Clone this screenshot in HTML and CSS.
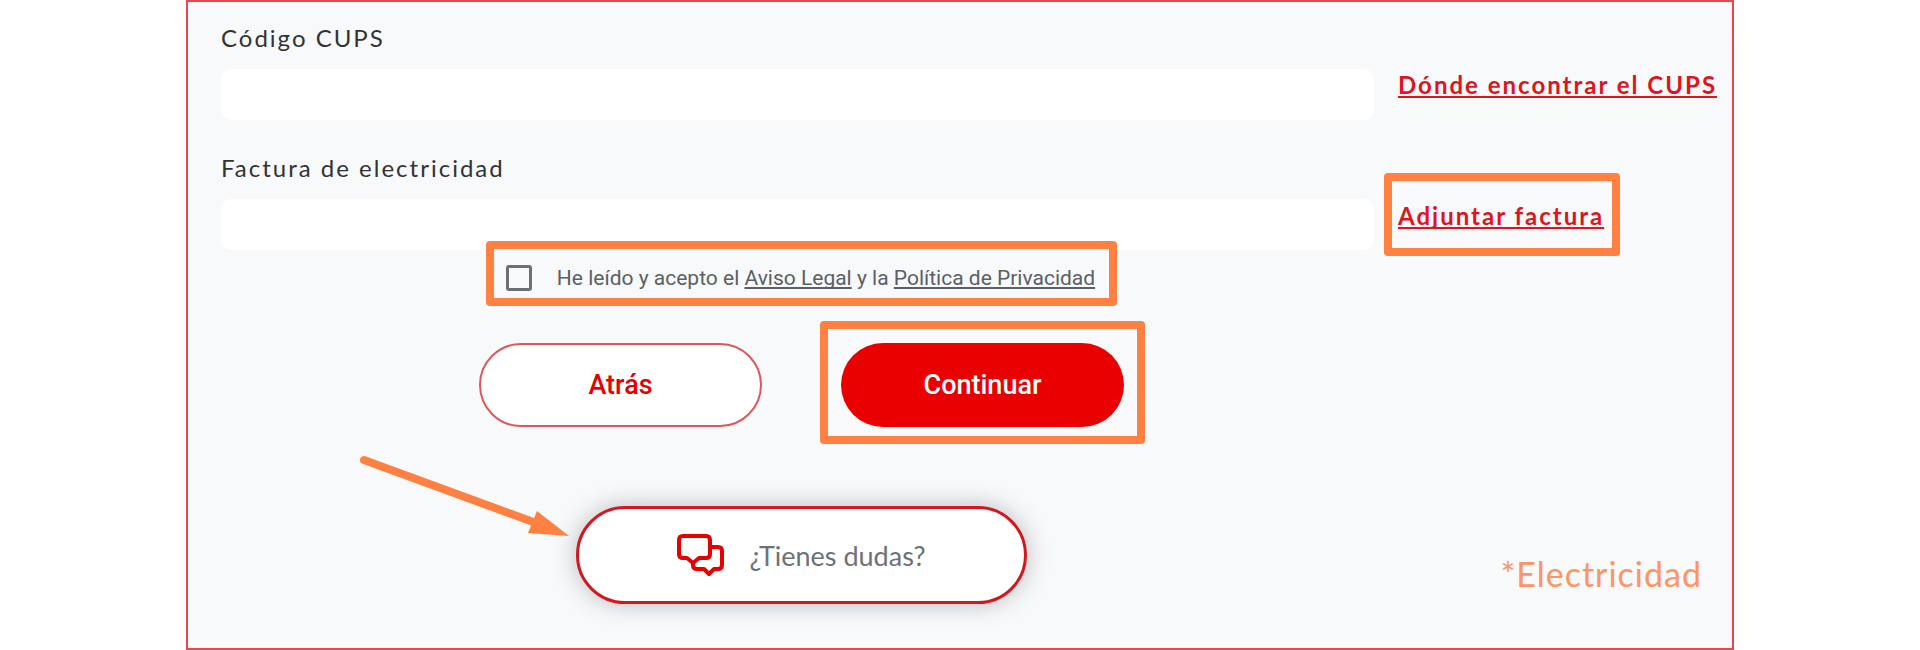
FILE: index.html
```html
<!DOCTYPE html>
<html lang="es">
<head>
    <meta charset="UTF-8">
    <meta name="viewport" content="width=device-width, initial-scale=1.0">
    <title>Código CUPS - Electricidad</title>
    <link rel="stylesheet" href="styles.css">
</head>
<body>
    <form class="panel">
        <div class="row">
            <div class="field">
                <label for="cups">Código CUPS</label>
                <input type="text" id="cups" name="cups">
            </div>
            <a class="help-link" href="#">Dónde encontrar el CUPS</a>
        </div>

        <div class="row">
            <div class="field">
                <label for="factura">Factura de electricidad</label>
                <input type="text" id="factura" name="factura">
            </div>
            <div class="highlight highlight-link">
                <a href="#">Adjuntar factura</a>
            </div>
        </div>

        <div class="row">
            <div class="actions">
                <div class="highlight consent">
                    <input type="checkbox" id="acepto" name="acepto">
                    <label for="acepto">He leído y acepto el <a href="#">Aviso Legal</a> y la <a href="#">Política de Privacidad</a></label>
                </div>

                <div class="buttons">
                    <button type="button" class="btn btn-back">Atrás</button>
                    <div class="highlight highlight-btn">
                        <button type="submit" class="btn btn-next">Continuar</button>
                    </div>
                </div>

                <div class="help">
                    <!-- Flecha hacia el botón de ayuda -->
                    <svg class="arrow" width="220" height="92" viewBox="0 0 220 92" aria-hidden="true">
                        <path d="M8 8 L180 71" stroke="#ff8040" stroke-width="8" stroke-linecap="round"/>
                        <path d="M181 59 L213 84 L172 81 Z" fill="#ff8040"/>
                    </svg>
                    <button type="button" class="btn-help">
                        <svg width="48" height="43" viewBox="0 0 48 43" fill="none" stroke="#e60000" stroke-width="4" stroke-linejoin="round" aria-hidden="true">
                            <path d="M6 2 H29 Q33 2 33 6 V20 Q33 24 29 24 H22 L16 29 L10 24 H6 Q2 24 2 20 V6 Q2 2 6 2 Z"/>
                            <path d="M33 13 H41 Q45 13 45 17 V31 Q45 35 41 35 H37 L32 40 L27 35 H20 Q16 35 16 31 V29"/>
                        </svg>
                        <span>¿Tienes dudas?</span>
                    </button>
                </div>
            </div>
            <p class="note">*Electricidad</p>
        </div>
    </form>
</body>
</html>
```
FILE: styles.css
```css
* {
    margin: 0;
    padding: 0;
    box-sizing: border-box;
}

body {
    background-color: white;
    padding: 0 186px;
    font-family: 'Lato', sans-serif;
}

.panel {
    min-height: 100vh;
    padding: 21px 18px 0 33px;
    border: 2px solid #e8484c;
    background-color: #f7f9fb;
    display: flex;
    flex-direction: column;
}

.row {
    display: grid;
    grid-template-columns: 1fr 316px;
    column-gap: 24px;
    align-items: end;
}

.row + .row {
    margin-top: 33px;
}

.row + .row:last-child {
    margin-top: -9px;
}

.field {
    display: flex;
    flex-direction: column;
    gap: 16px;
}

.field label {
    font-size: 24px;
    line-height: 30px;
    letter-spacing: 2px;
    color: #333;
}

.field input {
    width: 100%;
    height: 51px;
    padding: 0 16px;
    border: none;
    border-radius: 10px;
    background-color: white;
    font-size: 20px;
}

.help-link,
.highlight-link a {
    font-size: 24px;
    font-weight: bold;
    line-height: 30px;
    letter-spacing: 2px;
    white-space: nowrap;
    color: #e0141c;
    text-underline-offset: 2px;
    text-decoration-thickness: 2px;
    text-decoration-skip-ink: none;
}

.help-link {
    margin-bottom: 20px;
}

/* Recuadros naranjas */
.highlight {
    border: 8px solid #ff8040;
    border-radius: 4px;
}

.highlight-link {
    justify-self: start;
    display: flex;
    margin: 0 0 -6px -14px;
    padding: 20px 8px 17px 6px;
}

.actions {
    display: flex;
    flex-direction: column;
    align-items: center;
    padding-left: 8px;
}

.consent {
    position: relative;
    display: flex;
    align-items: center;
    gap: 25px;
    height: 65px;
    padding: 8px 14px 0 12px;
    background-color: #f7f9fb;
    font-family: 'Roboto', sans-serif;
    font-size: 21px;
    color: #5a6066;
}

.consent input {
    appearance: none;
    width: 26px;
    height: 26px;
    border: 3px solid #6c7075;
    border-radius: 3px;
}

.consent input:checked {
    background-color: #e60000;
}

.consent a {
    color: inherit;
    text-underline-offset: 2px;
    text-decoration-thickness: 2px;
    text-decoration-skip-ink: none;
}

.buttons {
    display: flex;
    gap: 79px;
    margin-top: 37px;
}

.highlight-btn {
    margin: -22px -21px -17px;
    padding: 14px 13px 9px;
}

.btn {
    width: 283px;
    height: 84px;
    border-radius: 42px;
    font-family: 'Roboto', sans-serif;
    font-size: 27px;
    font-weight: 500;
    cursor: pointer;
}

.btn-back {
    border: 2px solid #e0565a;
    background-color: white;
    color: #e60000;
}

.btn-next {
    display: block;
    border: none;
    background-color: #eb0000;
    color: white;
}

.help {
    position: relative;
    margin-top: 79px;
}

.arrow {
    position: absolute;
    top: -54px;
    right: 100%;
    fill: none;
}

.btn-help {
    display: flex;
    align-items: center;
    justify-content: center;
    gap: 24px;
    width: 451px;
    height: 98px;
    border: 3px solid #d2181e;
    border-radius: 49px;
    background-color: white;
    box-shadow: 0 0 24px rgba(0, 0, 0, 0.25);
    font-family: 'Lato', sans-serif;
    font-size: 27px;
    color: #6b7278;
    cursor: pointer;
}

.note {
    justify-self: end;
    padding: 0 12px 8px 0;
    font-size: 34px;
    line-height: 44px;
    letter-spacing: 1px;
    color: #ff9464;
}

@media (max-width: 1500px) {
    body {
        padding: 0 16px;
    }
}

@media (max-width: 1100px) {
    .row {
        grid-template-columns: 1fr;
        row-gap: 16px;
    }

    .buttons {
        flex-wrap: wrap;
        justify-content: center;
    }
}
```
